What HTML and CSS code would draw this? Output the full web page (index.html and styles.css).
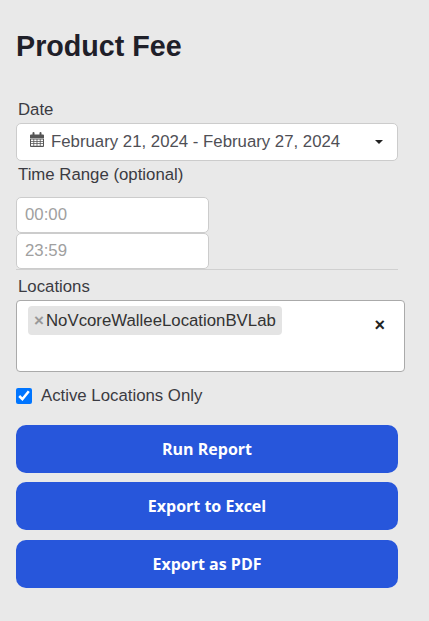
FILE: index.html
```html
<!DOCTYPE html>
<html lang="en">
<head>
  <meta charset="UTF-8">
  <meta name="viewport" content="width=device-width, initial-scale=1.0">
  <title>Product Fee</title>
  <link rel="stylesheet" href="styles.css">
</head>
<body>
  <div class="container">
    <h1 class="title">Product Fee</h1>
    <label class="field-label date-label">Date</label>
    <div class="date-range">
      <svg class="calendar" viewBox="0 0 14 15" width="14" height="15">
        <path fill="#555" d="M0 3.5a1 1 0 0 1 1-1h1.5V1a1 1 0 0 1 2 0v1.5h5V1a1 1 0 0 1 2 0v1.5H13a1 1 0 0 1 1 1V6H0z"/>
        <path fill="#555" fill-rule="evenodd" d="M0 6.5h14V14a1 1 0 0 1-1 1H1a1 1 0 0 1-1-1zM1 7.500v1.500h2.400V7.500zm3.200 0v1.500h2.400V7.500zm3.200 0v1.500h2.400V7.500zm3.200 0v1.500H13V7.500zM1 9.800v1.500h2.400V9.800zm3.200 0v1.500h2.400V9.800zm3.200 0v1.500h2.400V9.800zm3.200 0v1.500H13V9.800zM1 12.100v1.700h2.400v-1.700zm3.200 0v1.700h2.400v-1.700zm3.200 0v1.700h2.400v-1.700zm3.200 0v1.700H13v-1.700z"/>
      </svg>
      <span class="date-text">February 21, 2024 - February 27, 2024</span>
      <span class="caret"></span>
    </div>
    <label class="field-label time-label">Time Range (optional)</label>
    <input class="time-input" type="text" placeholder="00:00">
    <input class="time-input" type="text" placeholder="23:59">
    <hr class="divider">
    <label class="field-label locations-label">Locations</label>
    <div class="select-box">
      <span class="tag"><span class="tag-remove">×</span>NoVcoreWalleeLocationBVLab</span>
      <span class="clear">×</span>
    </div>
    <label class="check-row">
      <input class="check" type="checkbox" checked>
      <span>Active Locations Only</span>
    </label>
    <button class="btn run-btn">Run Report</button>
    <button class="btn excel-btn">Export to Excel</button>
    <button class="btn pdf-btn">Export as PDF</button>
  </div>
</body>
</html>
```
FILE: styles.css
```css
* {
  margin: 0;
  padding: 0;
  box-sizing: border-box;
}
html,
body {
  height: 100%;
  overflow: hidden;
  background: #e9e9e9;
  font-family: "Liberation Sans", Arial, sans-serif;
  color: #33333b;
}
.container {
  width: 398px;
  padding: 29px 0 0 16px;
  display: flex;
  flex-direction: column;
  align-items: flex-start;
}
.title {
  font-size: 28.7px;
  line-height: 34px;
  font-weight: 700;
  color: #1f2029;
}
.field-label {
  display: block;
  padding-left: 2px;
  font-size: 16.8px;
  line-height: 20px;
  color: #3b3b42;
}
.date-label {
  margin-top: 37px;
  margin-bottom: 3px;
}
.date-range {
  width: 382px;
  height: 38px;
  display: flex;
  align-items: center;
  padding: 0 14px 0 13px;
  background: #fff;
  border: 1px solid #ccc;
  border-radius: 5px;
}
.calendar {
  margin-top: -5px;
  margin-right: 7px;
}
.date-text {
  font-size: 16.8px;
  color: #4f4f55;
}
.caret {
  margin-left: auto;
  margin-top: -1px;
  border-top: 4px solid #222;
  border-left: 4px solid transparent;
  border-right: 4px solid transparent;
}
.time-label {
  margin-top: 4px;
  margin-bottom: 12px;
}
.time-input {
  display: block;
  width: 193px;
  height: 36px;
  padding: 0 8px;
  font-family: inherit;
  font-size: 16.8px;
  background: #fff;
  border: 1px solid #ccc;
  border-radius: 5px;
}
.time-input::placeholder {
  color: #a0a0a0;
  opacity: 1;
}
.divider {
  width: 382px;
  border: 0;
  border-top: 1px solid #d0d0d0;
}
.locations-label {
  margin-top: 7px;
  margin-bottom: 3px;
}
.select-box {
  width: 389px;
  height: 72px;
  display: flex;
  align-items: flex-start;
  padding: 5px 19px 0 11px;
  background: #fff;
  border: 1px solid #aaa;
  border-radius: 4px;
}
.tag {
  height: 29px;
  display: flex;
  align-items: center;
  padding: 0 6px;
  font-size: 16.8px;
  color: #333;
  background: #e4e4e4;
  border-radius: 4px;
}
.tag-remove {
  width: 12px;
  font-weight: 700;
  font-size: 17px;
  color: #999;
}
.clear {
  margin-left: auto;
  margin-top: 11px;
  font-size: 18px;
  line-height: 17px;
  font-weight: 700;
  color: #222;
}
.check-row {
  display: flex;
  align-items: center;
  margin-top: 14px;
  font-size: 16.8px;
  line-height: 20px;
  color: #3b3b42;
}
.check {
  width: 16px;
  height: 16px;
  margin-right: 9px;
  accent-color: #0075ff;
}
.btn {
  display: block;
  width: 382px;
  height: 48px;
  font-family: "Open Sans", sans-serif;
  font-size: 16px;
  font-weight: 700;
  color: #fff;
  background: #2756db;
  border: 0;
  border-radius: 10px;
}
.run-btn {
  margin-top: 19px;
}
.excel-btn {
  margin-top: 9px;
}
.pdf-btn {
  margin-top: 10px;
}
```
